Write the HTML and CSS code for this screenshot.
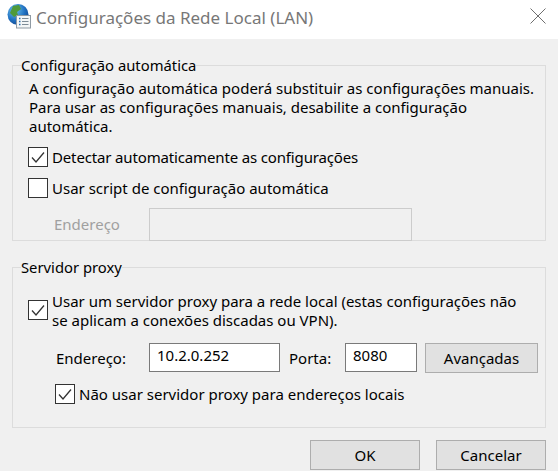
FILE: index.html
```html
<!DOCTYPE html>
<html lang="pt-BR">
<head>
    <meta charset="UTF-8">
    <title>Configurações da Rede Local (LAN)</title>
    <link rel="stylesheet" href="styles.css">
</head>
<body>
    <div class="dialog">
        <div class="titlebar">
            <svg class="app-icon" width="24" height="26" viewBox="0 0 24 26">
                <defs>
                    <radialGradient id="globe" cx="0.35" cy="0.3" r="0.8">
                        <stop offset="0" stop-color="#6fc3ee"/>
                        <stop offset="0.6" stop-color="#1f6fc0"/>
                        <stop offset="1" stop-color="#123f86"/>
                    </radialGradient>
                </defs>
                <circle cx="11" cy="11.5" r="10.5" fill="url(#globe)"/>
                <path d="M6 3 L12 2 L14 6 L10 9 L11 12 L7 14 L3 10 Z" fill="#4f9a3a"/>
                <path d="M12 15 L17 13 L19 17 L14 21 Z" fill="#5aa343"/>
                <rect x="9.5" y="12.5" width="14" height="12.5" fill="#f4f6f7" stroke="#8f9aa3"/>
                <path d="M12 15.5h1.5M12 18.5h1.5M12 21.5h1.5" stroke="#2a6fb0" stroke-width="1.4"/>
                <path d="M15 15.5h6.5M15 18.5h6.5M15 21.5h6.5" stroke="#7d8b96"/>
            </svg>
            <span class="title">Configurações da Rede Local (LAN)</span>
            <svg class="close" width="16" height="16" viewBox="0 0 16 16">
                <path d="M0.5 0.5L15.5 15.5M15.5 0.5L0.5 15.5" stroke="#6e6e6e" stroke-width="1"/>
            </svg>
        </div>

        <div class="content">
            <fieldset class="group group-auto">
                <legend>Configuração automática</legend>
                <p class="info">A configuração automática poderá substituir as configurações manuais.<br>Para usar as configurações manuais, desabilite a configuração<br>automática.</p>
                <label class="check check-first">
                    <span class="box"><svg width="18" height="18" viewBox="0 0 18 18"><path d="M3 9.5l4 4.5L15 4.5" fill="none" stroke="#333" stroke-width="1.3"/></svg></span>
                    <span class="tight">Detectar automaticamente as configurações</span>
                </label>
                <label class="check check-second">
                    <span class="box"></span>
                    Usar script de configuração automática
                </label>
                <div class="script-row">
                    <span class="field-label disabled">Endereço</span>
                    <input class="input input-disabled" type="text" disabled>
                </div>
            </fieldset>

            <fieldset class="group group-proxy">
                <legend>Servidor proxy</legend>
                <label class="check check-proxy">
                    <span class="box"><svg width="18" height="18" viewBox="0 0 18 18"><path d="M3 9.5l4 4.5L15 4.5" fill="none" stroke="#333" stroke-width="1.3"/></svg></span>
                    <span>Usar um servidor proxy para a rede local (estas configurações não<br>se aplicam a conexões discadas ou VPN).</span>
                </label>
                <div class="proxy-row">
                    <span class="field-label field-label-proxy">Endereço:</span>
                    <input class="input input-address" type="text" value="10.2.0.252">
                    <span class="port-label">Porta:</span>
                    <input class="input input-port" type="text" value="8080">
                    <button class="btn btn-advanced" type="button">Avançadas</button>
                </div>
                <label class="check check-local">
                    <span class="box"><svg width="18" height="18" viewBox="0 0 18 18"><path d="M3 9.5l4 4.5L15 4.5" fill="none" stroke="#333" stroke-width="1.3"/></svg></span>
                    Não usar servidor proxy para endereços locais
                </label>
            </fieldset>

            <div class="actions">
                <button class="btn btn-main" type="button">OK</button>
                <button class="btn btn-main" type="button">Cancelar</button>
            </div>
        </div>
    </div>
</body>
</html>
```

FILE: styles.css
```css
* {
    box-sizing: border-box;
}

html, body {
    height: 100%;
}

body {
    margin: 0;
    background: #f0f0f0;
    color: #000;
    font-family: "Noto Sans", "Open Sans", sans-serif;
    font-size: 15px;
    line-height: 19px;
    overflow: hidden;
}

.titlebar {
    display: flex;
    align-items: flex-start;
    height: 39px;
    padding: 3px 12px 0 7px;
    background: #fff;
}

.app-icon {
    flex: none;
}

.title {
    flex: 1;
    margin-left: 5px;
    color: #777;
    font-size: 17px;
    line-height: 30px;
}

.close {
    margin-top: 5px;
}

.content {
    padding: 15px 12px 0;
}

.group {
    margin: 0;
    min-width: 0;
    border: 1px solid #dcdcdc;
    padding: 0 0 0 15px;
}

.group legend {
    margin-left: -7px;
    padding: 2px 0 0;
    height: 22px;
    font-size: 14.8px;
}

.group-auto {
    height: 187px;
}

.group-proxy {
    height: 172px;
    margin-top: 15px;
}

.info {
    margin: 3px 0 0 1px;
}

.check {
    display: flex;
    align-items: center;
    gap: 4px;
}

.box {
    flex: none;
    display: flex;
    align-items: center;
    justify-content: center;
    width: 20px;
    height: 20px;
    background: #fff;
    border: 1px solid #333;
}

.tight {
    letter-spacing: -0.15px;
}

.check-first {
    margin-top: 11px;
}

.check-second {
    margin-top: 11px;
}

.script-row {
    display: flex;
    align-items: center;
    margin-top: 10px;
}

.field-label {
    flex: none;
    width: 121px;
    padding-left: 26px;
}

.field-label-proxy {
    padding: 2px 0 0 28px;
}

.disabled {
    color: #a0a0a0;
}

.input {
    height: 29px;
    padding: 0 7px 4px;
    border: 1px solid #7a7a7a;
    background: #fff;
    color: #000;
    font: inherit;
    outline: none;
}

.input-disabled {
    width: 263px;
    height: 33px;
    border-color: #ccc;
    background: #f0f0f0;
}

.check-proxy {
    margin-top: 14px;
}

.check-proxy .box {
    margin-bottom: 2px;
}

.proxy-row {
    display: flex;
    align-items: center;
    margin-top: 11px;
}

.input-address {
    width: 131px;
}

.port-label {
    margin-left: 9px;
    padding-top: 2px;
    width: 56px;
}

.input-port {
    width: 72px;
}

.btn {
    background: #e1e1e1;
    border: 1px solid #adadad;
    color: #000;
    font: inherit;
    padding: 0;
}

.btn-advanced {
    width: 113px;
    height: 30px;
    margin: 2px 0 0 8px;
}

.check-local {
    margin: 11px 0 0 27px;
}

.actions {
    display: flex;
    justify-content: flex-end;
    gap: 16px;
    margin-top: 12px;
}

.btn-main {
    width: 110px;
    height: 30px;
}
```
